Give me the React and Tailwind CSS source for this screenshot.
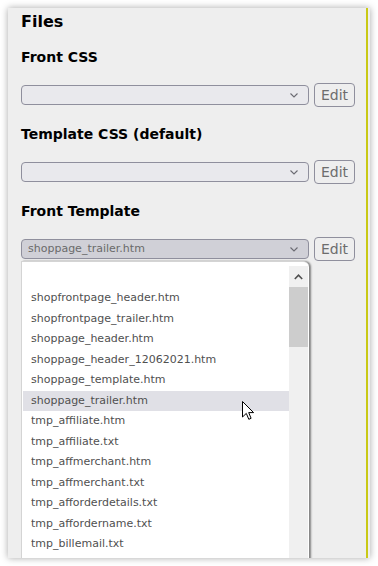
import React from "react";

const items = [
  "shopfrontpage_header.htm",
  "shopfrontpage_trailer.htm",
  "shoppage_header.htm",
  "shoppage_header_12062021.htm",
  "shoppage_template.htm",
  "shoppage_trailer.htm",
  "tmp_affiliate.htm",
  "tmp_affiliate.txt",
  "tmp_affmerchant.htm",
  "tmp_affmerchant.txt",
  "tmp_afforderdetails.txt",
  "tmp_affordername.txt",
  "tmp_billemail.txt",
];

const font = { fontFamily: '"DejaVu Sans", Verdana, sans-serif' };

function Chevron() {
  return (
    <svg width="8" height="5" viewBox="0 0 8 5" className="shrink-0">
      <polyline points="0.5,0.5 4,4 7.5,0.5" fill="none" stroke="#6b6b72" strokeWidth="1.1" />
    </svg>
  );
}

function SelectRow({ value, active }) {
  return (
    <div className="flex items-center gap-[5px] h-[24px] mb-[18px]">
      <div
        className={
          "w-[288px] h-[20px] rounded-[4px] border border-[#8f8f9d] flex items-center pl-[6px] pr-[10px] " +
          (active ? "bg-[#d0d0d7]" : "bg-[#e9e9ed]")
        }
      >
        <span className="flex-1 text-[11px] leading-[18px] text-[#6a6a6a] font-['DejaVu_Sans']">{value}</span>
        <Chevron />
      </div>
      <div className="w-[41px] h-[24px] rounded-[4px] border border-[#8f8f9d] bg-[#eeeeee] flex items-center justify-center text-[14px] text-[#6d6d6d] font-['DejaVu_Sans']">
        Edit
      </div>
    </div>
  );
}

function Heading({ children }) {
  return (
    <div className="h-[18px] leading-[18px] mb-[17px] text-[14px] font-bold text-black font-['DejaVu_Sans']">
      {children}
    </div>
  );
}

export default function App() {
  return (
    <div className="w-[378px] h-[566px] bg-white p-2" style={font}>
      <div className="relative w-[362px] h-[550px] bg-[#eeeeee] shadow-[0_0_7px_rgba(0,0,0,0.35)] overflow-hidden flex">
        <div className="flex-1 pl-[13px] pt-[4px]">
          <div className="h-[20px] leading-[20px] mb-[16px] text-[16px] font-bold text-black font-['DejaVu_Sans']">
            Files
          </div>
          <Heading>Front CSS</Heading>
          <SelectRow value="" />
          <Heading>Template CSS (default)</Heading>
          <SelectRow value="" />
          <Heading>Front Template</Heading>
          <SelectRow value="shoppage_trailer.htm" active />
        </div>
        <div className="w-[2px] bg-[#c9c916]" />
        <div className="w-[2px]" />

        {/* dropdown popup */}
        <div className="absolute left-[13px] top-[253px] w-[288px] h-[320px] bg-white border-l border-t border-[#d4d4d4] rounded-tr-[6px] shadow-[2px_0_2px_rgba(0,0,0,0.45)] flex">
          <div className="flex-1 pt-[26px] pl-[1px]">
            {items.map((t) => (
              <div
                key={t}
                className={
                  "h-[20.5px] leading-[20.5px] pl-[8px] text-[11px] text-[#505050] font-['DejaVu_Sans'] " +
                  (t === "shoppage_trailer.htm" ? "bg-[#e0e0e6]" : "")
                }
              >
                {t}
              </div>
            ))}
          </div>
          <div className="w-[19px] mt-[4px] mr-[1px] bg-[#f0f0f0] flex flex-col">
            <div className="h-[21px] flex items-center justify-center">
              <svg width="9" height="6" viewBox="0 0 9 6">
                <polyline points="0.8,5 4.5,1.2 8.2,5" fill="none" stroke="#505050" strokeWidth="1.6" />
              </svg>
            </div>
            <div className="h-[60px] bg-[#cdcdcd]" />
          </div>
        </div>

        {/* mouse cursor */}
        <svg
          className="absolute left-[234px] top-[393px]"
          width="13"
          height="20"
          viewBox="0 0 13 20"
        >
          <path
            d="M0.5 0.5 L0.5 16 L4.3 12.4 L6.8 18.3 L9.1 17.3 L6.7 11.6 L11.6 11.6 Z"
            fill="white"
            stroke="black"
            strokeWidth="1"
            strokeLinejoin="miter"
          />
        </svg>
      </div>
    </div>
  );
}
